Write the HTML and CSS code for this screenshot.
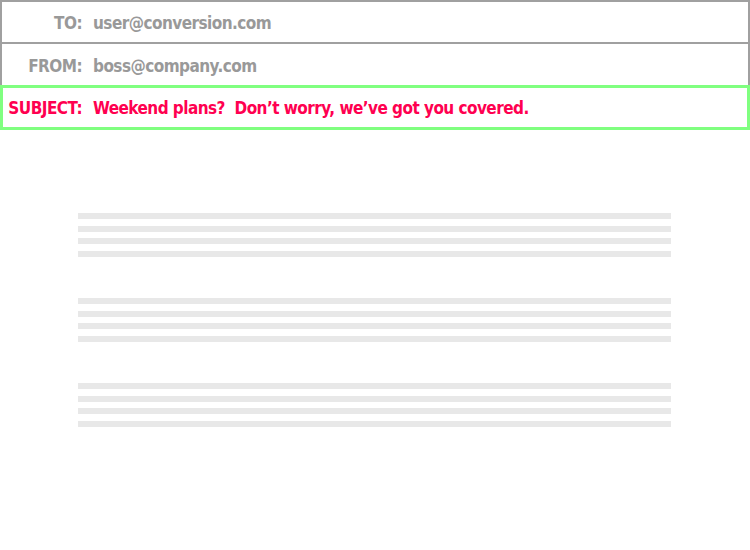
FILE: index.html
```html
<!DOCTYPE html>
<html>
<head>
<meta charset="utf-8">
<link rel="stylesheet" href="styles.css">
</head>
<body>
<div class="header">
  <div class="row row-to"><span class="label">TO:</span><span class="value">user@conversion.com</span></div>
  <div class="row row-from"><span class="label">FROM:</span><span class="value">boss@company.com</span></div>
  <div class="row row-subject"><span class="label">SUBJECT:</span><span class="value">Weekend plans?&nbsp; Don’t worry, we’ve got you covered.</span></div>
</div>
<div class="body">
  <div class="para"><div class="bar"></div><div class="bar"></div><div class="bar"></div><div class="bar"></div></div>
  <div class="para"><div class="bar"></div><div class="bar"></div><div class="bar"></div><div class="bar"></div></div>
  <div class="para"><div class="bar"></div><div class="bar"></div><div class="bar"></div><div class="bar"></div></div>
</div>
</body>
</html>
```
FILE: styles.css
```css
* { box-sizing: border-box; }
html, body { margin: 0; padding: 0; background: #fff; }
body {
  width: 750px;
  font-family: "DejaVu Sans Condensed", "Liberation Sans", sans-serif;
  font-weight: bold;
  font-size: 17px;
  letter-spacing: -0.55px;
}
.header { display: flex; flex-direction: column; }
.row {
  display: flex;
  align-items: center;
  color: #999;
  border-left: 2px solid #a0a0a0;
  border-right: 2px solid #a0a0a0;
  padding-top: 2px;
}
.row-to { height: 44px; border-top: 2px solid #a0a0a0; border-bottom: 2px solid #a0a0a0; }
.row-from { height: 41px; }
.row-subject { height: 45px; border: 3px solid #80ff80; color: #ff0050; padding-top: 0; }
.label { width: 80px; text-align: right; flex: none; }
.row-subject .label { width: 79px; }
.value { margin-left: 11px; white-space: pre; }
.body {
  width: 593px;
  margin: 83px 0 0 78px;
  display: flex;
  flex-direction: column;
  gap: 41px;
}
.para { display: flex; flex-direction: column; gap: 6.67px; }
.bar { height: 6px; background: #e8e8e8; }
```
